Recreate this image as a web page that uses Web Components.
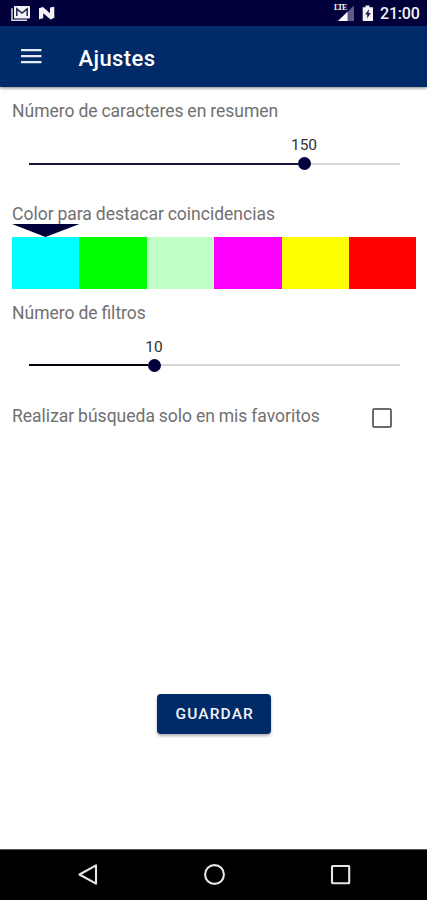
<!DOCTYPE html>
<html lang="es">
<head>
<meta charset="utf-8">
<title>Ajustes</title>
<style>
html, body { margin: 0; height: 100%; background: #fff; }
body { font-family: Roboto, "Liberation Sans", sans-serif; overflow: hidden; }
</style>
</head>
<body>
<settings-screen></settings-screen>
<script>
const define = (name, html, setup) => customElements.define(name, class extends HTMLElement {
  constructor() {
    super();
    const t = document.createElement('template');
    t.innerHTML = html;
    this.attachShadow({ mode: 'open' }).append(t.content.cloneNode(true));
  }
  connectedCallback() { if (setup) setup(this, this.shadowRoot); }
});

define('status-bar', `
<style>
:host { display: flex; align-items: center; height: 26px; box-sizing: border-box; padding: 0 7px 0 10px; background: #02003a; color: #f3f3f7; }
svg { display: block; flex: none; }
.n { margin-left: 7px; }
.signal { margin-left: auto; display: flex; width: 20px; height: 18px; position: relative; }
.lte { position: absolute; left: 0; top: -1px; font: 700 8px/10px "Liberation Serif", serif; letter-spacing: -1px; }
.bat { margin-left: 8px; }
time { width: 40px; margin-left: 6px; font-size: 16px; line-height: 20px; font-weight: 500; letter-spacing: -.2px; white-space: nowrap; padding-top: 2px; }
</style>
<svg width="21" height="18" viewBox="0 0 21 18"><path d="M2 4.2V16.3H17" fill="none" stroke="#dcdce6" stroke-width="1.5"/><rect x="4" y="2" width="16" height="12.4" rx="1" fill="#f3f3f7"/><path d="M6.8 12V4.8L12 9l5.200-4.200V12" fill="none" stroke="#24224c" stroke-width="1.500"/></svg>
<svg class="n" width="18" height="18" viewBox="0 0 18 18"><path d="M1 4.200 5 3l7 6.200V3.600l4.300-.8v11L12.600 15.600 5.200 9.200v5L1 15.200z" fill="#f3f3f7"/></svg>
<div class="signal"><svg width="20" height="18" viewBox="0 0 20 18"><path d="M4 17 20 1.500V17z" fill="#5e5c88"/><path d="M4 17 13.500 7.800V17z" fill="#fff"/></svg><span class="lte">LTE</span></div>
<svg class="bat" width="12" height="18" viewBox="0 0 12 18"><path d="M3.500 1.500h4v1.800H11V17H.700V3.300h2.800z" fill="#f3f3f7"/><path d="M7 5.200 3 10.500h2.200v4L8.800 9H6.600z" fill="#24224c"/></svg>
<time>21:00</time>`);

define('app-bar', `
<style>
:host { display: flex; align-items: center; height: 61px; box-sizing: border-box; padding-left: 20.500px; background: #012a68; color: #fff; box-shadow: 0 1px 3px rgba(0,0,0,.5); position: relative; }
h1 { margin: 4px 0 0 37px; font-size: 22px; line-height: 28px; font-weight: 500; letter-spacing: .4px; }
</style>
<svg width="21" height="16" viewBox="0 0 21 16"><path d="M0 1.200h20.500M0 7.200h20.500M0 13.200h20.500" stroke="#e8ecf5" stroke-width="2.200"/></svg>
<h1><slot></slot></h1>`);

define('setting-label', `
<style>
:host { display: block; font-size: 17.520px; word-spacing: -.500px; line-height: 22px; color: #707070; white-space: nowrap; }
</style><slot></slot>`);

define('value-slider', `
<style>
:host { display: block; margin: 0 16.500px 0 17px; }
.value { width: 40px; margin-left: calc(var(--at) - 20px); text-align: center; font-size: 15.500px; line-height: 20px; color: #303030; }
.track { display: flex; align-items: center; height: 13px; margin-top: 2px; }
.on { width: calc(var(--at) - 6.500px); height: 2px; background: var(--line); }
.thumb { width: 13px; height: 13px; border-radius: 50%; background: #02003a; }
.off { flex: 1; height: 2px; background: #d6d6d6; }
</style>
<div class="value"><slot></slot></div>
<div class="track"><div class="on"></div><div class="thumb"></div><div class="off"></div></div>`);

define('color-picker', `
<style>
:host { display: block; }
svg { display: block; }
.row { display: grid; grid-template-columns: repeat(6, 1fr); height: 51.500px; }
</style>
<svg width="68" height="13" viewBox="0 0 68 13"><path d="M0 0h67.500L33.500 13z" fill="#02003a"/></svg>
<div class="row"></div>`, (host, root) => {
  const row = root.querySelector('.row');
  row.replaceChildren(...host.getAttribute('colors').split(' ').map(c => {
    const d = document.createElement('div');
    d.style.background = c;
    return d;
  }));
});

define('check-row', `
<style>
:host { display: flex; justify-content: space-between; align-items: flex-start; padding-right: 24.500px; }
.box { width: 20px; height: 20px; box-sizing: border-box; border: 2px solid #6b6b6b; border-radius: 2.500px; margin-top: 3px; }
</style>
<setting-label><slot></slot></setting-label><div class="box"></div>`);

define('raised-button', `
<style>
:host { display: block; }
button { display: block; width: 114px; height: 40px; padding: 0 0 0 1px; border: 0; border-radius: 4px; background: #012a68; color: #f1f3f8; font: 500 15.500px/41px Roboto, "Liberation Sans", sans-serif; letter-spacing: 1.100px; box-shadow: 0 2px 3px rgba(0,0,0,.3); }
</style><button><slot></slot></button>`);

define('nav-bar', `
<style>
:host { display: flex; height: 51px; box-sizing: border-box; align-items: center; justify-content: space-between; padding: 0 75px 0 77px; background: #000; border-top: 1px solid #555; }
svg { display: block; fill: none; stroke: #e6e6e6; stroke-width: 2.100; stroke-linejoin: round; }
</style>
<svg width="22" height="22" viewBox="0 0 22 22"><path d="M2.500 10.500 19 1.300v18.400z"/></svg>
<svg width="22" height="22" viewBox="0 0 22 22"><circle cx="10.500" cy="10.500" r="9.400"/></svg>
<svg width="22" height="22" viewBox="0 0 22 22"><rect x="2" y="2" width="17.200" height="17.200" rx=".5"/></svg>`);

define('settings-screen', `
<style>
:host { display: flex; flex-direction: column; height: 900px; background: #fff; }
main { flex: 1; display: flex; flex-direction: column; padding: 13px 10.500px 0 12px; }
.s1 { margin-top: 13px; }
.l2 { margin-top: 33px; }
.pick { margin-top: -1px; }
.l3 { margin-top: 13.500px; }
.s2 { margin-top: 12.500px; }
.check { margin-top: 33px; }
raised-button { align-self: center; margin: auto 0 115px; }
</style>
<status-bar></status-bar>
<app-bar>Ajustes</app-bar>
<main>
<setting-label>Número de caracteres en resumen</setting-label>
<value-slider class="s1" style="--at:275px;--line:#19163f">150</value-slider>
<setting-label class="l2">Color para destacar coincidencias</setting-label>
<color-picker class="pick" colors="#00ffff #00ff00 #c2ffc8 #ff00ff #ffff00 #ff0000"></color-picker>
<setting-label class="l3">Número de filtros</setting-label>
<value-slider class="s2" style="--at:125px;--line:#050510">10</value-slider>
<check-row class="check">Realizar búsqueda solo en mis favoritos</check-row>
<raised-button>GUARDAR</raised-button>
</main>
<nav-bar></nav-bar>`);
</script>
</body>
</html>
